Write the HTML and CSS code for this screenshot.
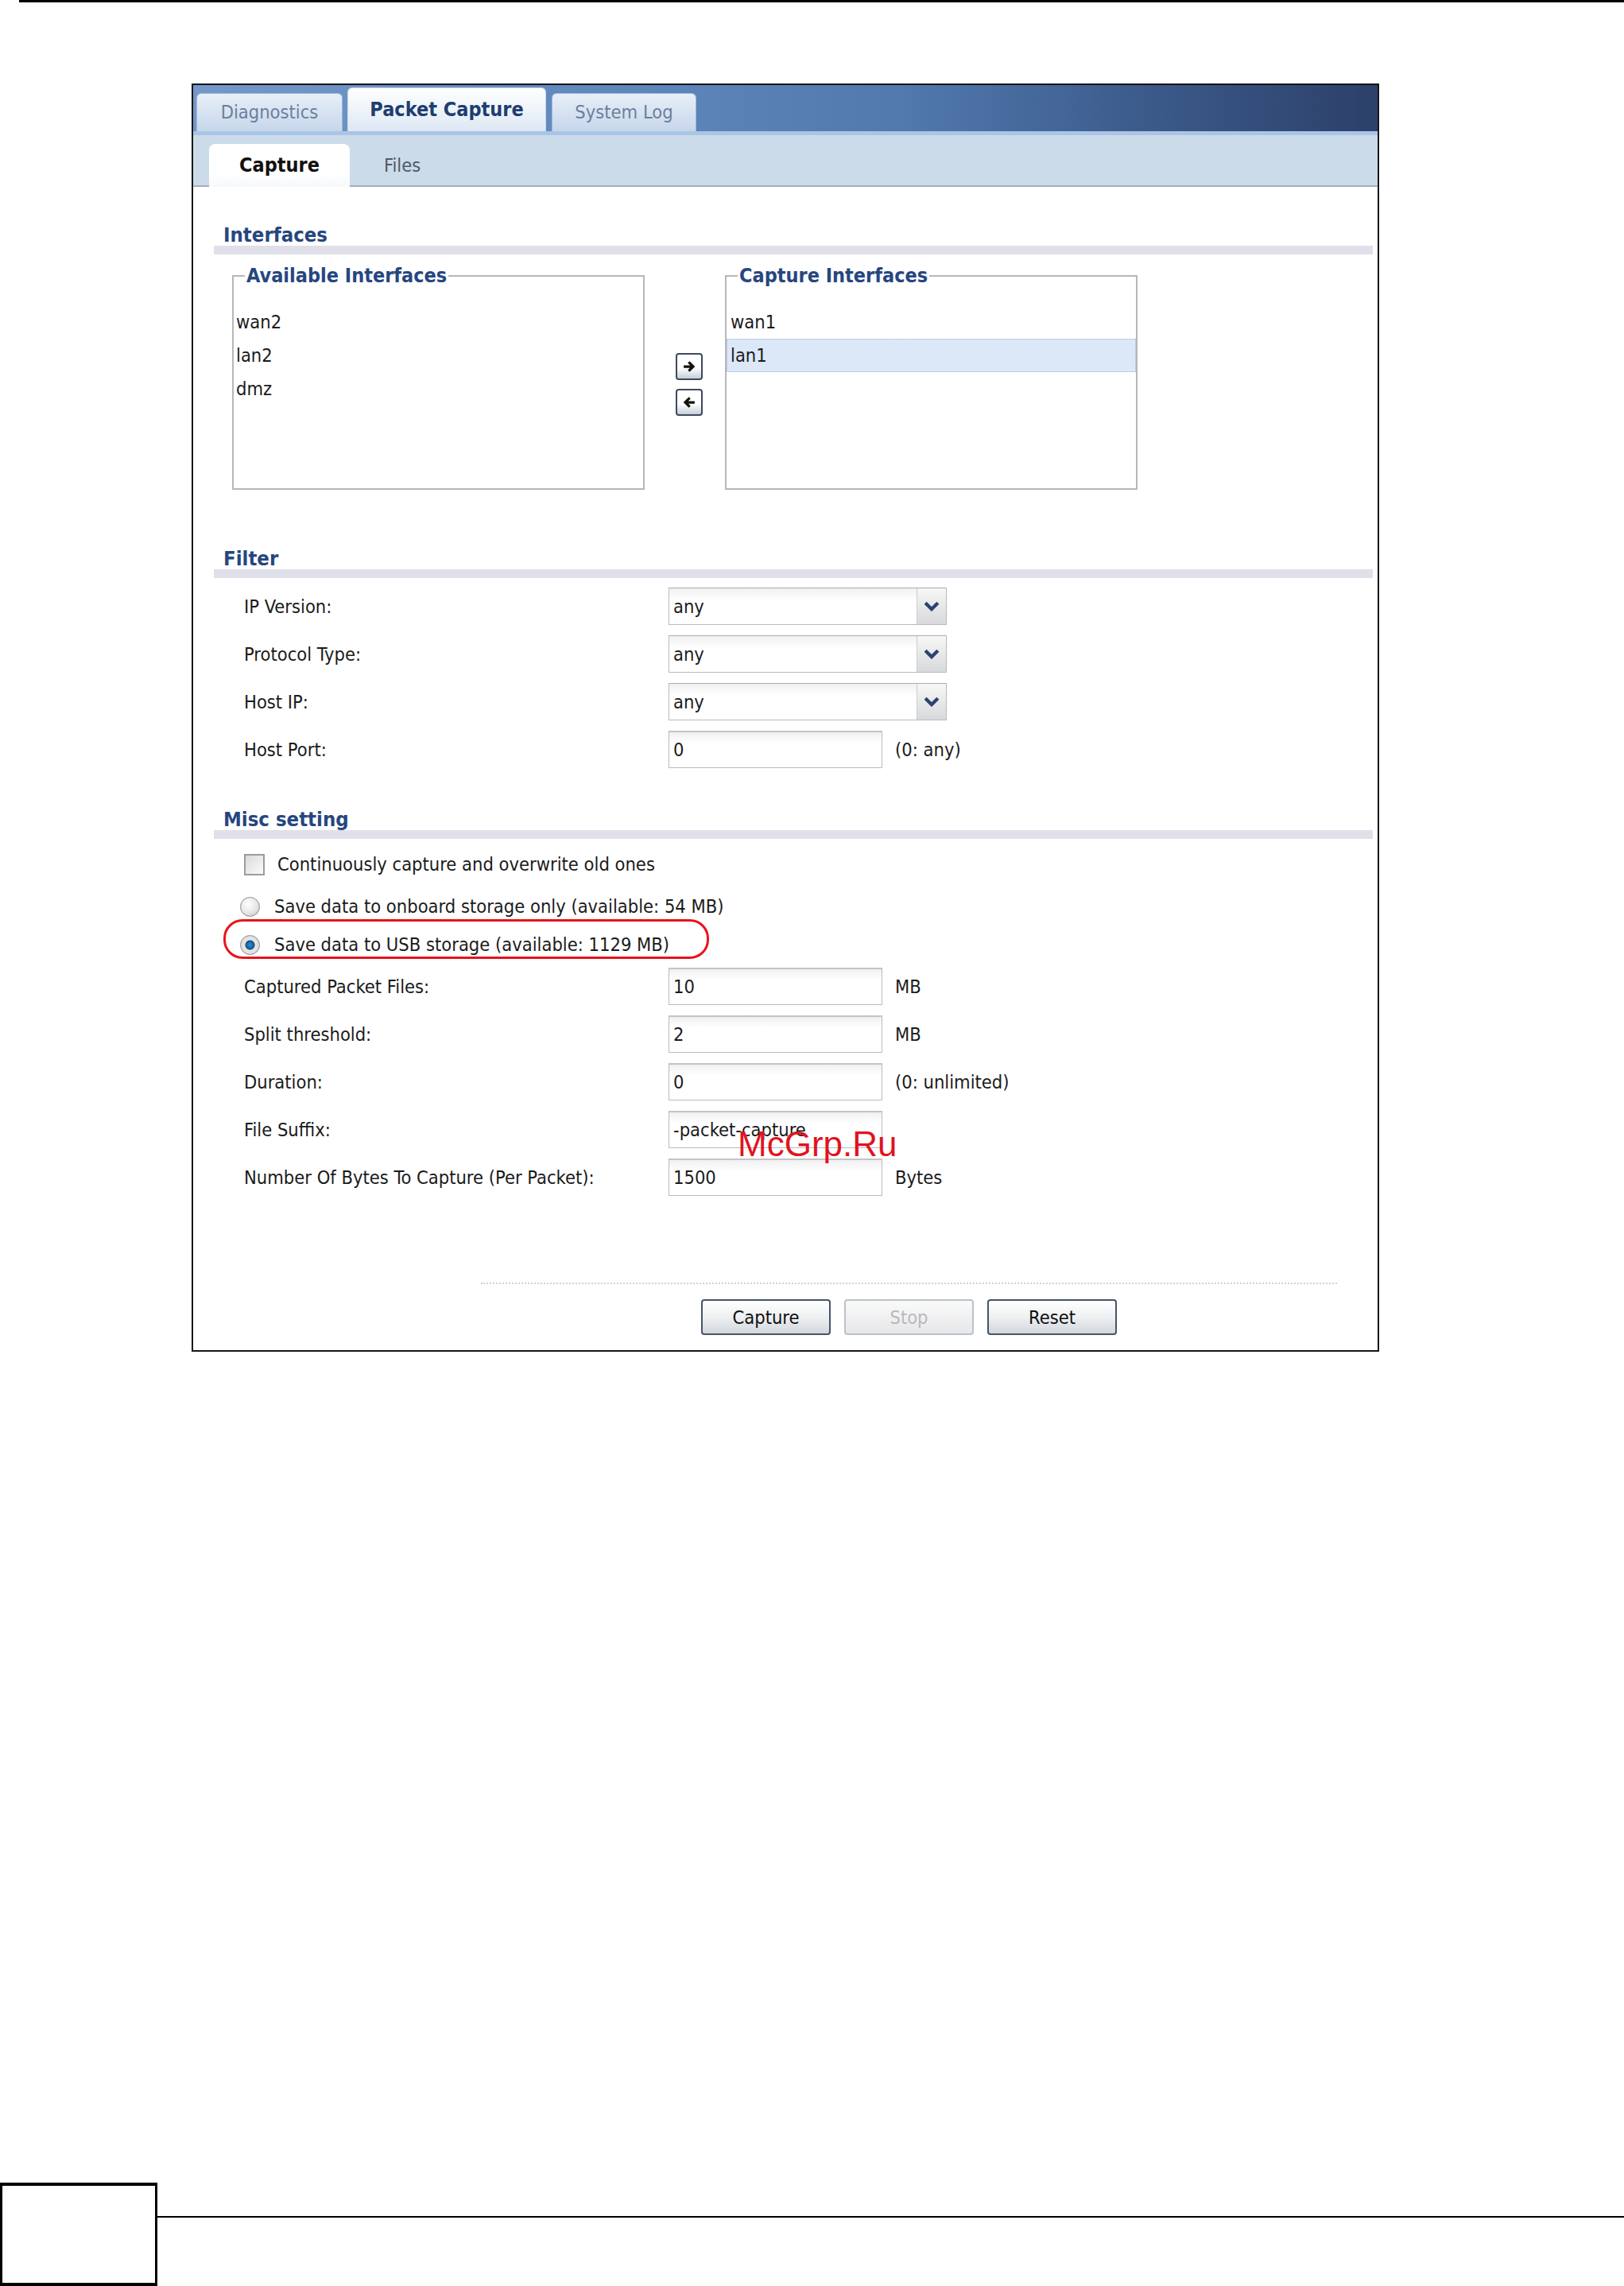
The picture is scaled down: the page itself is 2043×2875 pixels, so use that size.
FILE: index.html
```
<!DOCTYPE html>
<html lang="en">
<head>
  <meta charset="UTF-8" />
  <title>Packet Capture</title>
  <link rel="stylesheet" href="styles.css">
</head>
<body>

  <div class="rule-top"></div>

  <div class="panel">
    <div class="tabbar">
      <div class="tab">Diagnostics</div>
      <div class="tab active">Packet Capture</div>
      <div class="tab">System Log</div>
    </div>
    <div class="subbar">
      <div class="subtab active">Capture</div>
      <div class="subtab">Files</div>
    </div>

    <div class="content">
      <div class="sec-title">Interfaces</div>
      <div class="sec-band"></div>

      <div class="iface-row">
        <fieldset class="iface-box">
          <legend>Available Interfaces</legend>
          <div class="iface-list">
            <div class="iface-item">wan2</div>
            <div class="iface-item">lan2</div>
            <div class="iface-item">dmz</div>
          </div>
        </fieldset>
        <div class="move-btns">
          <div class="move-btn">
            <svg viewBox="0 0 16 16" width="20" height="20"><path d="M2.5 8h9 M7.5 3.5l4.5 4.5-4.5 4.5" fill="none" stroke="#111" stroke-width="2.6"/></svg>
          </div>
          <div class="move-btn">
            <svg viewBox="0 0 16 16" width="20" height="20"><path d="M13.5 8h-9 M8.5 3.5l-4.5 4.5 4.5 4.5" fill="none" stroke="#111" stroke-width="2.6"/></svg>
          </div>
        </div>
        <fieldset class="iface-box">
          <legend>Capture Interfaces</legend>
          <div class="iface-list cap">
            <div class="iface-item">wan1</div>
            <div class="iface-item selected">lan1</div>
          </div>
        </fieldset>
      </div>

      <div class="sec-title filter-title">Filter</div>
      <div class="sec-band"></div>

      <div class="form-rows">
        <div class="form-row">
          <div class="form-label">IP Version:</div>
          <div class="select"><span>any</span><span class="select-btn"><svg viewBox="0 0 14 9" width="20" height="13"><path d="M1.5 1.5l5.5 5.5 5.5-5.5" fill="none" stroke="#2e4170" stroke-width="3"/></svg></span></div>
        </div>
        <div class="form-row">
          <div class="form-label">Protocol Type:</div>
          <div class="select"><span>any</span><span class="select-btn"><svg viewBox="0 0 14 9" width="20" height="13"><path d="M1.5 1.5l5.5 5.5 5.5-5.5" fill="none" stroke="#2e4170" stroke-width="3"/></svg></span></div>
        </div>
        <div class="form-row">
          <div class="form-label">Host IP:</div>
          <div class="select"><span>any</span><span class="select-btn"><svg viewBox="0 0 14 9" width="20" height="13"><path d="M1.5 1.5l5.5 5.5 5.5-5.5" fill="none" stroke="#2e4170" stroke-width="3"/></svg></span></div>
        </div>
        <div class="form-row">
          <div class="form-label">Host Port:</div>
          <div class="text-in">0</div>
          <div class="unit">(0: any)</div>
        </div>
      </div>

      <div class="sec-title misc-title">Misc setting</div>
      <div class="sec-band"></div>

      <div class="opt-row check-row">
        <span class="checkbox"></span>
        <span>Continuously capture and overwrite old ones</span>
      </div>
      <div class="opt-row">
        <span class="radio"></span>
        <span>Save data to onboard storage only (available: 54 MB)</span>
      </div>
      <div class="opt-row marked">
        <span class="radio checked"></span>
        <span>Save data to USB storage (available: 1129 MB)</span>
      </div>

      <div class="form-rows misc-rows">
        <div class="form-row">
          <div class="form-label">Captured Packet Files:</div>
          <div class="text-in">10</div>
          <div class="unit">MB</div>
        </div>
        <div class="form-row">
          <div class="form-label">Split threshold:</div>
          <div class="text-in">2</div>
          <div class="unit">MB</div>
        </div>
        <div class="form-row">
          <div class="form-label">Duration:</div>
          <div class="text-in">0</div>
          <div class="unit">(0: unlimited)</div>
        </div>
        <div class="form-row">
          <div class="form-label">File Suffix:</div>
          <div class="text-in">-packet-capture</div>
        </div>
        <div class="form-row">
          <div class="form-label">Number Of Bytes To Capture (Per Packet):</div>
          <div class="text-in">1500</div>
          <div class="unit">Bytes</div>
        </div>
      </div>

      <div class="actions">
        <div class="actions-line"></div>
        <div class="btn-row">
          <button class="btn">Capture</button>
          <button class="btn disabled">Stop</button>
          <button class="btn">Reset</button>
        </div>
      </div>
    </div>

    <div class="watermark">McGrp.Ru</div>
  </div>

  <div class="page-foot">
    <div class="page-num"></div>
    <div class="foot-rule"></div>
  </div>

</body>
</html>
```

FILE: styles.css
```
html, body {
  margin: 0;
  background: #fff;
}
body {
  font-family: Tahoma, "DejaVu Sans Condensed", "DejaVu Sans", sans-serif;
  font-size: 23.5px;
  color: #1b1b1b;
  height: 2875px;
  overflow: hidden;
}
.rule-top {
  height: 3px;
  margin-left: 24px;
  background: #000;
}
.panel {
  position: relative;
  box-sizing: border-box;
  width: 1494px;
  margin: 102px 0 0 241px;
  border: 2px solid #161616;
  background: #fff;
}

/* top tabs */
.tabbar {
  display: flex;
  align-items: flex-end;
  height: 58px;
  padding-left: 4px;
  background: linear-gradient(to right, #7398c9 0%, #6088bd 35%, #5179ae 60%, #3a5888 82%, #2c4069 100%);
  border-bottom: 5px solid #a9c5e6;
}
.tab {
  box-sizing: border-box;
  width: 184px;
  height: 48px;
  margin: 0 6px 0 0;
  border: 1px solid #9ab7dc;
  border-bottom: none;
  border-radius: 6px 6px 0 0;
  background: linear-gradient(#e8eff8, #c6d6ea);
  color: #6b7f9e;
  text-align: center;
  line-height: 46px;
}
.tab.active {
  width: 250px;
  height: 55px;
  line-height: 54px;
  background: linear-gradient(#ffffff, #dde8f4);
  color: #203d70;
  font-weight: bold;
  font-size: 25px;
  border-color: #c8d8ec;
}
.tab:last-child {
  width: 182px;
  margin-left: 1px;
}

/* sub tabs */
.subbar {
  display: flex;
  align-items: flex-end;
  height: 63px;
  padding-left: 20px;
  background: #ccdbea;
  border-bottom: 2px solid #a7aeb8;
}
.subtab {
  height: 52px;
  line-height: 54px;
  padding: 0 43px;
  color: #505a66;
}
.subtab.active {
  box-sizing: border-box;
  width: 177px;
  padding: 0;
  margin-bottom: -2px;
  height: 54px;
  text-align: center;
  background: linear-gradient(#ffffff 70%, #f6f8fb);
  border-radius: 8px 8px 0 0;
  color: #111;
  font-weight: bold;
  font-size: 25px;
}

/* body */
.content {
  padding: 46px 0 19px;
}
.sec-title {
  padding-left: 38px;
  line-height: 28px;
  font-weight: bold;
  font-size: 25.5px;
  color: #26467f;
}
.sec-band {
  height: 11px;
  margin: 0 6px 0 26px;
  background: #dfe0e9;
}
.filter-title { margin-top: 72px; }
.misc-title { margin-top: 50px; }

.iface-row {
  display: flex;
  align-items: flex-start;
  margin: 13px 0 0 49px;
}
.iface-box {
  width: 519px;
  box-sizing: border-box;
  margin: 0;
  padding: 0;
  min-width: 0;
  border: 2px solid #b4b7bd;
}
.iface-box legend {
  margin-left: 14px;
  padding: 0 2px;
  line-height: 28px;
  font-weight: bold;
  font-size: 25px;
  color: #26467f;
}
.iface-list {
  box-sizing: border-box;
  height: 253px;
  padding: 23px 0 0 3px;
}
.iface-list.cap {
  padding-left: 0;
}
.iface-item {
  height: 42px;
  line-height: 42px;
}
.iface-list.cap .iface-item {
  padding-left: 5px;
}
.iface-item.selected {
  background: #dce7f8;
  outline: 1px dotted #9fb3d6;
  outline-offset: -1px;
}
.move-btns {
  display: flex;
  flex-direction: column;
  gap: 11px;
  margin: 111px 28px 0 39px;
}
.move-btn {
  box-sizing: border-box;
  width: 34px;
  height: 34px;
  border: 2px solid #3c4a5f;
  border-radius: 4px;
  background: linear-gradient(#ffffff 55%, #c9ced6);
  display: flex;
  align-items: center;
  justify-content: center;
}

/* form rows */
.form-rows {
  margin-top: 12px;
}
.form-row {
  display: flex;
  align-items: center;
  height: 47px;
  margin-bottom: 13px;
  padding-left: 64px;
}
.form-label {
  width: 534px;
}
.select {
  box-sizing: border-box;
  display: flex;
  align-items: center;
  justify-content: space-between;
  width: 350px;
  height: 47px;
  padding-left: 5px;
  border: 1px solid #b9bbbf;
  border-top-color: #a9abb0;
  background: linear-gradient(#f1f1f1, #ffffff 35%);
}
.select-btn {
  box-sizing: border-box;
  width: 37px;
  height: 100%;
  display: flex;
  align-items: center;
  justify-content: center;
  border-left: 1px solid #c9cbce;
  background: linear-gradient(#f7f7f7, #d8d9db);
}
.text-in {
  box-sizing: border-box;
  width: 269px;
  height: 47px;
  line-height: 45px;
  padding-left: 5px;
  border: 1px solid #b9bbbf;
  border-top: 2px solid #c2c4c8;
  background: linear-gradient(#f0f0f0, #ffffff 30%);
  white-space: nowrap;
  overflow: hidden;
}
.unit {
  margin-left: 16px;
}

/* options */
.opt-row {
  display: flex;
  align-items: center;
  height: 46px;
  padding-left: 59px;
  gap: 18px;
}
.check-row {
  margin-top: 9px;
  padding-left: 64px;
  gap: 16px;
}
.opt-row + .opt-row {
  margin-top: 7px;
}
.opt-row.marked {
  box-sizing: border-box;
  width: 611px;
  height: 50px;
  margin: -7px 0 0 38px;
  padding: 14px 0 0 18px;
  border: 3px solid #e8141c;
  border-radius: 24px;
}
.checkbox {
  box-sizing: border-box;
  width: 26px;
  height: 27px;
  border: 2px solid #9c9c9c;
  background: linear-gradient(135deg, #d9d9d9, #fbfbfb);
}
.radio {
  box-sizing: border-box;
  width: 25px;
  height: 25px;
  border-radius: 50%;
  border: 1px solid #8e8e8e;
  background: radial-gradient(circle at 40% 35%, #ffffff 0%, #e6e6e6 55%, #bdbdbd 100%);
}
.radio.checked {
  background: radial-gradient(circle at 50% 50%, #2f8fd0 0%, #1c5f99 28%, #144a7c 34%, #e9e9e9 40%, #cfcfcf 100%);
}
.misc-rows {
  margin-top: 11px;
}

/* bottom buttons */
.actions {
  margin: 109px 51px 0 362px;
}
.actions-line {
  border-top: 2px dotted #d2d2d2;
}
.btn-row {
  display: flex;
  justify-content: center;
  gap: 17px;
  margin-top: 19px;
}
.btn {
  width: 163px;
  height: 45px;
  border: 2px solid #465569;
  border-radius: 4px;
  background: linear-gradient(#ffffff, #eef0f2 50%, #d3d7dc);
  font-family: inherit;
  font-size: 23.5px;
  color: #111;
  padding: 0;
}
.btn.disabled {
  border-color: #bcc2ca;
  background: linear-gradient(#fafafa, #e6e7e9);
  color: #b9b9b9;
}

.watermark {
  position: absolute;
  left: 685px;
  top: 1310px;
  font-family: "Liberation Sans", Arial, sans-serif;
  font-size: 44px;
  line-height: 44px;
  color: #e0141e;
}

/* page footer */
.page-foot {
  display: flex;
  align-items: flex-start;
  margin-top: 1045px;
}
.page-num {
  box-sizing: border-box;
  width: 198px;
  height: 130px;
  border: 3px solid #000;
  border-top-width: 4px;
  border-bottom-width: 4px;
}
.foot-rule {
  flex: 1;
  height: 2px;
  margin-top: 42px;
  background: #000;
}
```
